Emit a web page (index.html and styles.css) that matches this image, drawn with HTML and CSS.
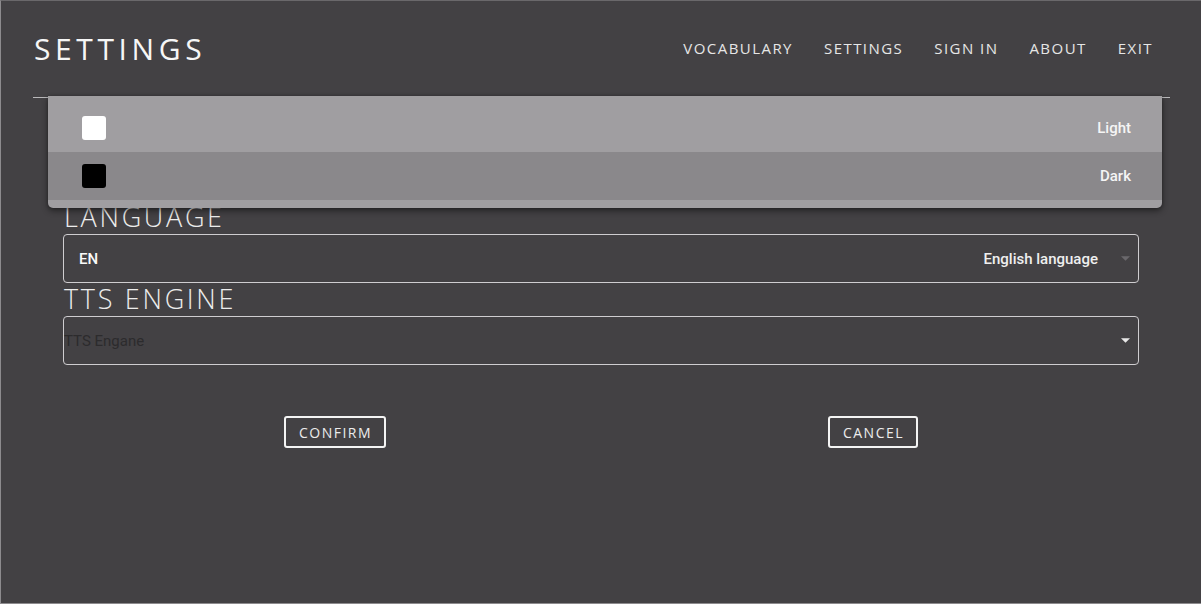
FILE: index.html
```html
<!DOCTYPE html>
<html lang="en">
<head>
<meta charset="utf-8">
<title>Settings</title>
<link rel="stylesheet" href="styles.css">
</head>
<body>
<div class="app">
  <header class="topbar">
    <h1 class="title">SETTINGS</h1>
    <nav class="nav">
      <a class="nav-link">VOCABULARY</a>
      <a class="nav-link">SETTINGS</a>
      <a class="nav-link">SIGN IN</a>
      <a class="nav-link">ABOUT</a>
      <a class="nav-link">EXIT</a>
    </nav>
  </header>
  <div class="rule"></div>

  <main class="content">
    <div class="field">
      <div class="label">LANGUAGE</div>
      <div class="select">
        <span class="select-code">EN</span>
        <span class="select-value">English language</span>
        <svg class="arrow arrow-dim" width="9" height="5" viewBox="0 0 10 5"><path d="M0 0h10L5 5z" fill="currentColor"/></svg>
      </div>
    </div>
    <div class="field">
      <div class="label">TTS ENGINE</div>
      <div class="select select-empty">
        <span class="placeholder">TTS Engane</span>
        <svg class="arrow" width="9" height="5" viewBox="0 0 10 5"><path d="M0 0h10L5 5z" fill="currentColor"/></svg>
      </div>
    </div>
    <div class="actions">
      <div class="action-cell"><button class="btn">CONFIRM</button></div>
      <div class="action-cell"><button class="btn">CANCEL</button></div>
    </div>
  </main>

  <div class="menu">
    <div class="menu-item">
      <span class="swatch swatch-white"></span>
      <span class="menu-text">Light</span>
    </div>
    <div class="menu-item menu-item-active">
      <span class="swatch swatch-black"></span>
      <span class="menu-text">Dark</span>
    </div>
  </div>
</div>
</body>
</html>
```

FILE: styles.css
```css
html, body {
  margin: 0;
  padding: 0;
  background: #434144;
}

.app {
  position: relative;
  width: 1201px;
  height: 604px;
  box-sizing: border-box;
  border-left: 1px solid #8d8b8e;
  border-top: 1px solid #6a686b;
  border-bottom: 1px solid #8d8b8e;
  background: #434144;
  font-family: "Open Sans", "DejaVu Sans", sans-serif;
  color: #f2f2f2;
  overflow: hidden;
}

.topbar {
  display: flex;
  justify-content: space-between;
  align-items: center;
  padding: 29px 48px 0 33px;
  height: 37px;
}

.title {
  margin: 0;
  font-size: 30px;
  font-weight: 400;
  letter-spacing: 4.6px;
  line-height: 37px;
  color: #f6f6f6;
}

.nav {
  display: flex;
  gap: 31px;
}

.nav-link {
  font-size: 15px;
  letter-spacing: 1.45px;
  color: #e6e6e6;
  line-height: 35px;
}

.rule {
  margin: 30px 31px 0 32px;
  border-top: 1px solid #b9b8ba;
}

.content {
  padding: 103px 62px 0 62px;
}

.field {
  display: flex;
  flex-direction: column;
}

.label {
  font-size: 27px;
  font-weight: 300;
  letter-spacing: 2.7px;
  line-height: 31px;
  height: 33px;
  padding-left: 1px;
  color: #ececec;
}

.select {
  height: 47px;
  border: 1px solid #cfcdd0;
  border-radius: 4px;
  display: flex;
  align-items: center;
  padding: 0 8px 0 15px;
  font-family: Roboto, "Liberation Sans", sans-serif;
  font-size: 15px;
}

.select-code {
  font-weight: 500;
  color: #fafafa;
}

.select-value {
  margin-left: auto;
  font-weight: 500;
  color: #efefef;
  margin-right: 23px;
}

.arrow {
  color: #e8e8e8;
}

.arrow-dim {
  color: #6a686c;
}

.select-empty {
  padding-left: 0;
}

.placeholder {
  color: #2c2b2d;
  font-weight: 400;
  flex: 1;
}

.actions {
  display: grid;
  grid-template-columns: 1fr 1fr;
  margin-top: 51px;
}

.action-cell {
  display: flex;
  justify-content: center;
}

.btn {
  height: 32px;
  padding: 0 12px 0 13px;
  margin-left: 6px;
  background: transparent;
  border: 2px solid #f4f4f4;
  border-radius: 3px;
  color: #ececec;
  font-family: "Open Sans", "DejaVu Sans", sans-serif;
  font-size: 14px;
  letter-spacing: 1.5px;
}

.menu {
  position: absolute;
  left: 47px;
  top: 95px;
  width: 1114px;
  padding: 8px 0;
  background: #a09ea1;
  border-radius: 0 0 5px 5px;
  box-shadow: 0 3px 6px rgba(0, 0, 0, 0.45), 0 0 3px rgba(0, 0, 0, 0.25);
  font-family: Roboto, "Liberation Sans", sans-serif;
  font-size: 15px;
}

.menu-item {
  display: flex;
  align-items: center;
  height: 48px;
  padding: 0 31px 0 34px;
}

.menu-item-active {
  background: #8a888b;
}

.swatch {
  width: 24px;
  height: 24px;
  border-radius: 3px;
}

.swatch-white { background: #ffffff; }
.swatch-black { background: #000000; }

.menu-text {
  margin-left: auto;
  color: #f5f5f5;
  font-weight: 500;
}
```
